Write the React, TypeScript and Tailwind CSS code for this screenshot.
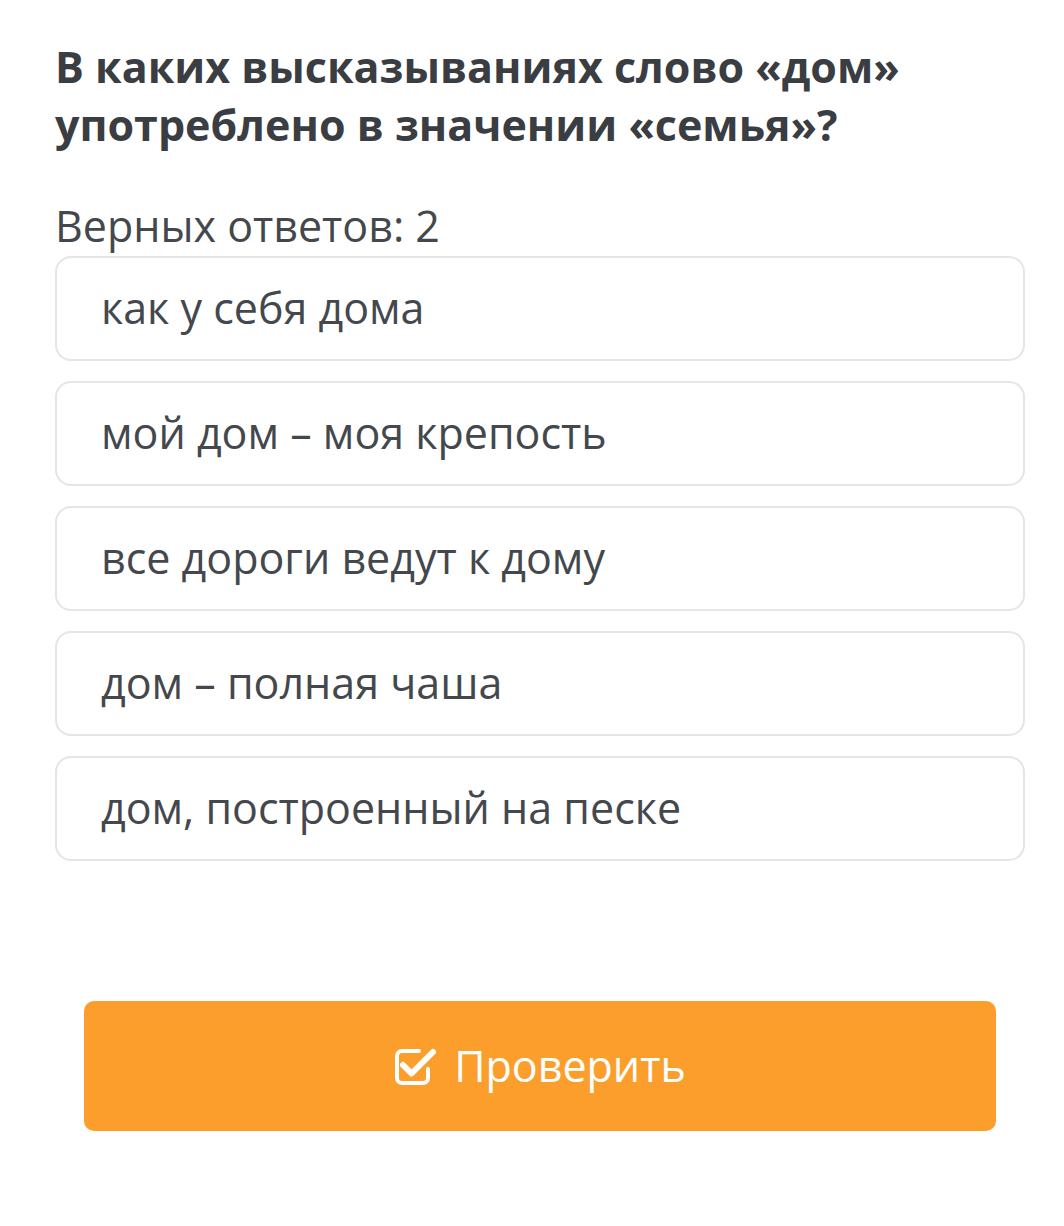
import React from "react";

const options = [
  "как у себя дома",
  "мой дом – моя крепость",
  "все дороги ведут к дому",
  "дом – полная чаша",
  "дом, построенный на песке",
];

function CheckSquare() {
  return (
    <svg viewBox="0 0 44 40" className="w-[44px] h-[40px]" fill="none">
      <path
        d="M25 5H8a5 5 0 0 0-5 5v22a5 5 0 0 0 5 5h21a5 5 0 0 0 5-5v-9"
        stroke="white"
        strokeWidth="4"
        strokeLinecap="round"
      />
      <path
        d="M9 19l8.5 8.5L39 6"
        stroke="white"
        strokeWidth="6"
        strokeLinecap="round"
        strokeLinejoin="round"
      />
    </svg>
  );
}

export default function App() {
  return (
    <main
      className="w-[1064px] min-h-[1226px] bg-white text-[#3a3d42]"
      style={{ fontFamily: '"Open Sans", sans-serif' }}
    >
      <div className="pt-[38px] pl-[55px] pr-[39px]">
        <h1 className="text-[43px] leading-[58px] font-bold text-[#3a3d42]">
          В каких высказываниях слово «дом»
          <br />
          употреблено в значении «семья»?
        </h1>
        <div className="mt-[45px] text-[43px] leading-[54px] text-[#44484d]">
          Верных ответов: 2
        </div>
        <div className="mt-[3px] flex flex-col gap-[20px]">
          {options.map((o) => (
            <div
              key={o}
              className="h-[105px] flex items-center pl-[44px] border-2 border-[#e3e5e6] rounded-[16px] text-[43px] text-[#44484d]"
            >
              {o}
            </div>
          ))}
        </div>
      </div>
      <div className="pl-[84px] pr-[68px] mt-[140px]">
        <button className="w-full h-[130px] bg-[#fb9e2c] rounded-[10px] flex items-center justify-center gap-[16px] text-white text-[43px]">
          <CheckSquare />
          Проверить
        </button>
      </div>
    </main>
  );
}
